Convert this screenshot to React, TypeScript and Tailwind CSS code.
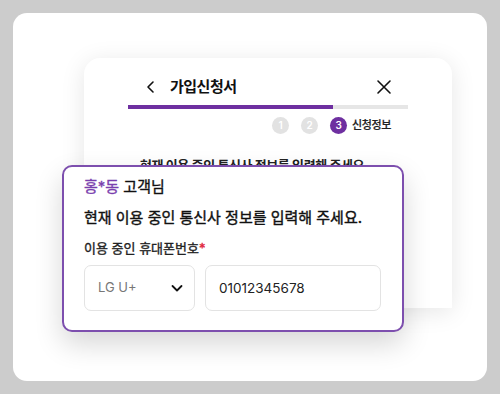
import React from "react";

const font = { fontFamily: 'Inter, "Noto Sans CJK KR", sans-serif' };

export default function App() {
  return (
    <div className="w-[500px] h-[394px] bg-[#cccccc] p-[13px]" style={font}>
      <div className="relative h-full w-full rounded-[14px] bg-white pt-[45px] pl-[71px]">
        {/* back card */}
        <div className="w-[368px] h-[250px] rounded-t-[16px] bg-white shadow-[0_4px_24px_rgba(0,0,0,0.10)] overflow-hidden">
          <div className="flex items-center h-[30px] mt-[14px] pl-[60px] pr-[60px]">
            <svg width="14" height="14" viewBox="0 0 14 14" fill="none" stroke="#111" strokeWidth="1.6" strokeLinecap="round" strokeLinejoin="round">
              <path d="M9 2 L4 7 L9 12" />
            </svg>
            <span className="ml-[12px] text-[15px] font-bold text-[#111] tracking-[-0.5px]">가입신청서</span>
            <div className="flex-1" />
            <svg width="16" height="16" viewBox="0 0 16 16" fill="none" stroke="#111" strokeWidth="1.6" strokeLinecap="round">
              <path d="M2 2 L14 14 M14 2 L2 14" />
            </svg>
          </div>
          <div className="mx-[44px] mt-[3px] h-[4px] bg-[#e6e6e6]">
            <div className="h-full w-[205px] bg-[#6e2fa0]" />
          </div>
          <div className="flex items-center justify-end gap-[12px] pr-[61px] mt-[8px]">
            <div className="w-[17px] h-[17px] rounded-full bg-[#e2e2e2] text-white text-[10px] font-semibold flex items-center justify-center">1</div>
            <div className="w-[17px] h-[17px] rounded-full bg-[#e2e2e2] text-white text-[10px] font-semibold flex items-center justify-center">2</div>
            <div className="flex items-center gap-[5px]">
              <div className="w-[17px] h-[17px] rounded-full bg-[#6e2fa0] text-white text-[10px] font-semibold flex items-center justify-center">3</div>
              <span className="text-[11px] font-medium text-[#222] tracking-[-0.4px] [-webkit-text-stroke:0.2px_#222]">신청정보</span>
            </div>
          </div>
          <div className="mt-[22px] pl-[56px] text-[13px] font-bold text-[#222] tracking-[-0.4px]">
            현재 이용 중인 통신사 정보를 입력해 주세요.
          </div>
        </div>

        {/* front card */}
        <div className="absolute left-[49px] top-[152px] w-[342px] h-[167px] rounded-[10px] border-2 border-[#7d4fae] bg-white shadow-[0_12px_28px_rgba(0,0,0,0.16)] px-[20px] pt-[9px]">
          <div className="text-[15px] leading-[22px] text-[#111] [-webkit-text-stroke:0.35px_#111]">
            <span className="text-[#7a3fae] [-webkit-text-stroke:0.35px_#7a3fae]">홍*동</span> 고객님
          </div>
          <div className="mt-[9px] text-[15px] leading-[22px] text-[#111] [-webkit-text-stroke:0.4px_#111]">
            현재 이용 중인 통신사 정보를 입력해 주세요.
          </div>
          <div className="mt-[9px] text-[13px] leading-[20px] text-[#222] [-webkit-text-stroke:0.35px_#222]">
            이용 중인 휴대폰번호<span className="text-[#e0243b] [-webkit-text-stroke:0.35px_#e0243b]">*</span>
          </div>
          <div className="mt-[7px] flex gap-[10px]">
            <div className="w-[111px] h-[46px] rounded-[7px] border border-[#e3e3e3] flex items-center pl-[13px] pr-[10px]">
              <span className="text-[13px] text-[#777]">LG U+</span>
              <div className="flex-1" />
              <svg width="14" height="14" viewBox="0 0 14 14" fill="none" stroke="#111" strokeWidth="1.8" strokeLinecap="round" strokeLinejoin="round">
                <path d="M2.5 5 L7 9.5 L11.5 5" />
              </svg>
            </div>
            <div className="w-[176px] h-[46px] rounded-[7px] border border-[#e3e3e3] flex items-center pl-[13px]">
              <span className="text-[13.5px] text-[#222]">01012345678</span>
            </div>
          </div>
        </div>
      </div>
    </div>
  );
}
